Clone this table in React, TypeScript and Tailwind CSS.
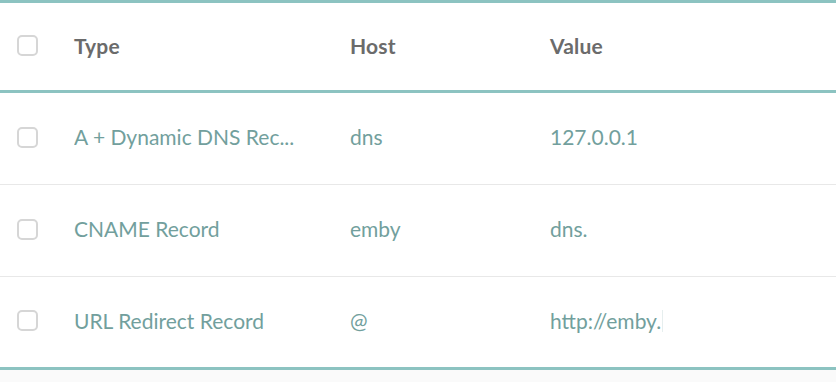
import React from 'react';

const rows = [
  { type: 'A + Dynamic DNS Rec...', host: 'dns', value: '127.0.0.1', h: 'h-[92px] border-b border-[#e8e8e8]' },
  { type: 'CNAME Record', host: 'emby', value: 'dns.', h: 'h-[92px] border-b border-[#e8e8e8]' },
  { type: 'URL Redirect Record', host: '@', value: 'http://emby.', h: 'h-[90px]', clip: true },
];

const Checkbox = () => (
  <span className="block w-[21px] h-[21px] rounded-[5px] border-2 border-[#d6d6d6] bg-white" />
);

export default function App() {
  return (
    <div className="w-[836px] h-[382px] bg-[#fafafa] font-['Lato',sans-serif]">
      <div className="bg-white border-t-[3px] border-b-[3px] border-[#8cc3c1]">
        <div className="flex items-center h-[90px] pb-[2px] border-b-[3px] border-[#8cc3c1] text-[21px] font-bold tracking-[0.2px] text-[#6b6b6b]">
          <div className="w-[74px] pl-[17px]">
            <Checkbox />
          </div>
          <div className="w-[276px]">Type</div>
          <div className="w-[200px]">Host</div>
          <div>Value</div>
        </div>
        {rows.map((r) => (
          <div key={r.type} className={`flex items-center pb-[3px] text-[21px] text-[#729f9d] ${r.h}`}>
            <div className="w-[74px] pl-[17px]">
              <Checkbox />
            </div>
            <div className="w-[276px]">
              <div className="overflow-hidden whitespace-nowrap">{r.type}</div>
            </div>
            <div className="w-[200px]">{r.host}</div>
            <div className="flex items-center whitespace-nowrap">
              {r.value}
              {r.clip && <span className="ml-px w-px h-[22px] bg-[#e6eeee]" />}
            </div>
          </div>
        ))}
      </div>
    </div>
  );
}
